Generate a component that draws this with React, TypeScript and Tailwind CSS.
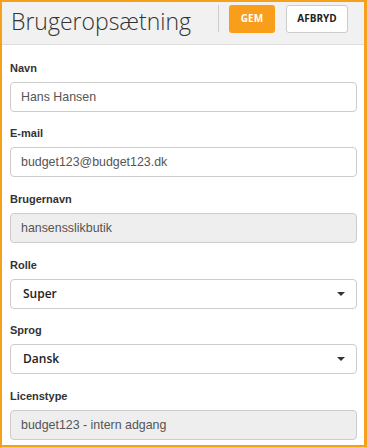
import React from "react";

const label = "block h-[13px] text-[11px] leading-[13px] font-bold text-[#333] mb-[7px]";
const labelFont = { fontFamily: '"Liberation Sans", Arial, sans-serif' };

function TextField({ value, disabled }: { value: string; disabled?: boolean }) {
  return (
    <div
      className={`h-[30px] w-[347px] rounded-[4px] border border-[#cccccc] flex items-center pl-[10px] text-[12.4px] text-[#555] ${disabled ? "bg-[#eeeeee]" : "bg-white"}`}
      style={{ fontFamily: '"Liberation Sans", Arial, sans-serif' }}
    >
      {value}
    </div>
  );
}

function SelectField({ value }: { value: string }) {
  return (
    <div
      className="h-[30px] w-[347px] rounded-[4px] border border-[#cccccc] bg-white flex items-center justify-between pl-[12px] pr-[11px] text-[12px] font-semibold text-[#222]"
      style={{ fontFamily: '"Open Sans", sans-serif' }}
    >
      <span>{value}</span>
      <svg width="8" height="4" viewBox="0 0 8 4">
        <path d="M0 0 L8 0 L4 4 Z" fill="#333" />
      </svg>
    </div>
  );
}

export default function App() {
  return (
    <div className="w-[367px] h-[447px] border-t-2 border-l-2 border-b-2 border-r-[3px] border-[#f5a11c] bg-white overflow-hidden">
      <div className="h-[43px] bg-[#f1f1f1] border-b border-[#dddddd] flex items-center">
        <div
          className="pl-[9px] text-[23px] font-light text-[#333] leading-none w-[216px] -mt-[3px]"
          style={{ fontFamily: '"Open Sans", sans-serif' }}
        >
          Brugeropsætning
        </div>
        <div className="w-px h-[27px] bg-[#cccccc] -mt-[10px]" />
        <div className="flex gap-[11px] ml-[10px] -mt-[9px]" style={{ fontFamily: '"Open Sans", sans-serif' }}>
          <div className="w-[46px] h-[28px] rounded-[3px] bg-[#f89e1b] text-white text-[10px] font-bold flex items-center justify-center">
            GEM
          </div>
          <div className="w-[62px] h-[28px] rounded-[3px] bg-white border border-[#cccccc] text-[#222] text-[10px] font-bold flex items-center justify-center">
            AFBRYD
          </div>
        </div>
      </div>
      <div className="px-[8px]" style={labelFont}>
        <div className="mt-[17px]">
          <span className={label}>Navn</span>
          <TextField value="Hans Hansen" />
        </div>
        <div className="mt-[15px]">
          <span className={label}>E-mail</span>
          <TextField value="budget123@budget123.dk" />
        </div>
        <div className="mt-[16px]">
          <span className={label}>Brugernavn</span>
          <TextField value="hansensslikbutik" disabled />
        </div>
        <div className="mt-[16px]">
          <span className={label}>Rolle</span>
          <SelectField value="Super" />
        </div>
        <div className="mt-[15px]">
          <span className={label}>Sprog</span>
          <SelectField value="Dansk" />
        </div>
        <div className="mt-[16px]">
          <span className={label}>Licenstype</span>
          <TextField value="budget123 - intern adgang" disabled />
        </div>
      </div>
    </div>
  );
}
